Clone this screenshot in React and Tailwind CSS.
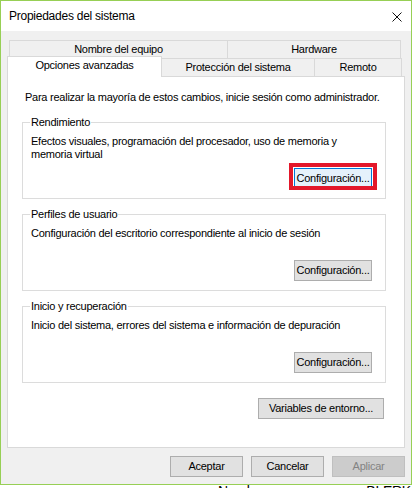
const FONT = "font-['Liberation_Sans',Arial,sans-serif]"

function Btn({ children, className = '', disabled = false }) {
  const look = disabled
    ? 'bg-[#cccccc] border-[#bfbfbf] text-[#838383]'
    : 'bg-[#e1e1e1] border-[#adadad] text-black'
  return (
    <button
      disabled={disabled}
      className={`h-[21px] border text-[11px] tracking-[-0.25px] leading-none flex items-center justify-center ${look} ${className}`}
    >
      {children}
    </button>
  )
}

function Group({ label, children, focused = false }) {
  return (
    <div className="h-[77px] w-[364px] border border-[#dcdcdc] flex flex-col pl-[8px] pr-[13px]">
      <span className="self-start -mt-[8px] -ml-[1px] px-[1px] bg-white h-[15px] leading-[15px] text-[11px]">
        {label}
      </span>
      <p className="mt-[5px] leading-[13px] text-[11px]">{children}</p>
      <div className="mt-auto mb-[9px] self-end relative">
        {focused ? (
          <>
            <button className="w-[78px] h-[21px] border border-[#0078d7] bg-[#e5f1fb] text-[11px] leading-none flex items-center justify-center">
              Configuración...
            </button>
            {/* annotation box drawn over the screenshot */}
            <span className="absolute -left-[5px] -right-[5px] -top-[5px] -bottom-[1px] border-[4px] border-[#e3172a]" />
          </>
        ) : (
          <Btn className="w-[78px]">Configuración...</Btn>
        )}
      </div>
    </div>
  )
}

export default function App() {
  return (
    <div className={`w-[412px] h-[488px] bg-white overflow-hidden text-black tracking-[-0.25px] ${FONT}`}>
      <div className="h-[485px] border border-[#97cf55] bg-[#f0f0f0] flex flex-col">
        {/* Title bar */}
        <div className="h-[30px] bg-white flex items-center justify-between pl-[8px] pr-[9px]">
          <span className="text-[12px] leading-none">Propiedades del sistema</span>
          <svg width="10" height="10" viewBox="0 0 10 10" className="mt-[1px]">
            <path d="M0.5 0.5 L9.5 9.5 M9.5 0.5 L0.5 9.5" stroke="#111" strokeWidth="1" fill="none" />
          </svg>
        </div>

        <div className="flex flex-col px-[6px] pt-[9px]">
          {/* Tabs, back row */}
          <div className="flex h-[18px] ml-[2px] text-[11px]">
            <div className="w-[219px] border border-b-0 border-[#d9d9d9] flex items-center justify-center">
              Nombre del equipo
            </div>
            <div className="w-[173px] border border-l-0 border-b-0 border-[#d9d9d9] flex items-center justify-center">
              Hardware
            </div>
          </div>
          {/* Tabs, front row */}
          <div className="flex h-[18px] items-end text-[11px]">
            <div className="relative z-10 w-[155px] h-[21px] -mb-[1px] bg-white border border-b-0 border-[#d9d9d9] flex items-center justify-center pb-[3px]">
              Opciones avanzadas
            </div>
            <div className="w-[153px] h-[18px] border-t border-r border-[#d9d9d9] flex items-center justify-center">
              Protección del sistema
            </div>
            <div className="w-[87px] h-[18px] border-t border-r border-[#d9d9d9] flex items-center justify-center">
              Remoto
            </div>
          </div>

          {/* Panel */}
          <div className="h-[372px] border border-[#d9d9d9] bg-white pl-[14px] pt-[13px] flex flex-col">
            <p className="ml-[3px] leading-[15px] text-[11px]">
              Para realizar la mayoría de estos cambios, inicie sesión como administrador.
            </p>
            <div className="mt-[17px]">
              <Group label="Rendimiento" focused>
                Efectos visuales, programación del procesador, uso de memoria y
                <br />
                memoria virtual
              </Group>
            </div>
            <div className="mt-[15px]">
              <Group label="Perfiles de usuario">
                Configuración del escritorio correspondiente al inicio de sesión
              </Group>
            </div>
            <div className="mt-[15px]">
              <Group label="Inicio y recuperación">
                Inicio del sistema, errores del sistema e información de depuración
              </Group>
            </div>
            <div className="mt-[15px] w-[364px] flex justify-end pr-[2px]">
              <Btn className="w-[126px]">Variables de entorno...</Btn>
            </div>
          </div>

          {/* Dialog buttons */}
          <div className="mt-[8px] flex justify-end gap-[8px]">
            <Btn className="w-[73px]">Aceptar</Btn>
            <Btn className="w-[73px]">Cancelar</Btn>
            <Btn className="w-[73px]" disabled>Aplicar</Btn>
          </div>
        </div>
      </div>

      {/* desktop text peeking below the window */}
      <div className="h-[3px] overflow-hidden flex text-[14px] leading-none">
        <span className="ml-[218px] -mt-[1px]">Nombre del</span>
        <span className="ml-[100px] -mt-[1px]">BLERKO</span>
      </div>
    </div>
  )
}
